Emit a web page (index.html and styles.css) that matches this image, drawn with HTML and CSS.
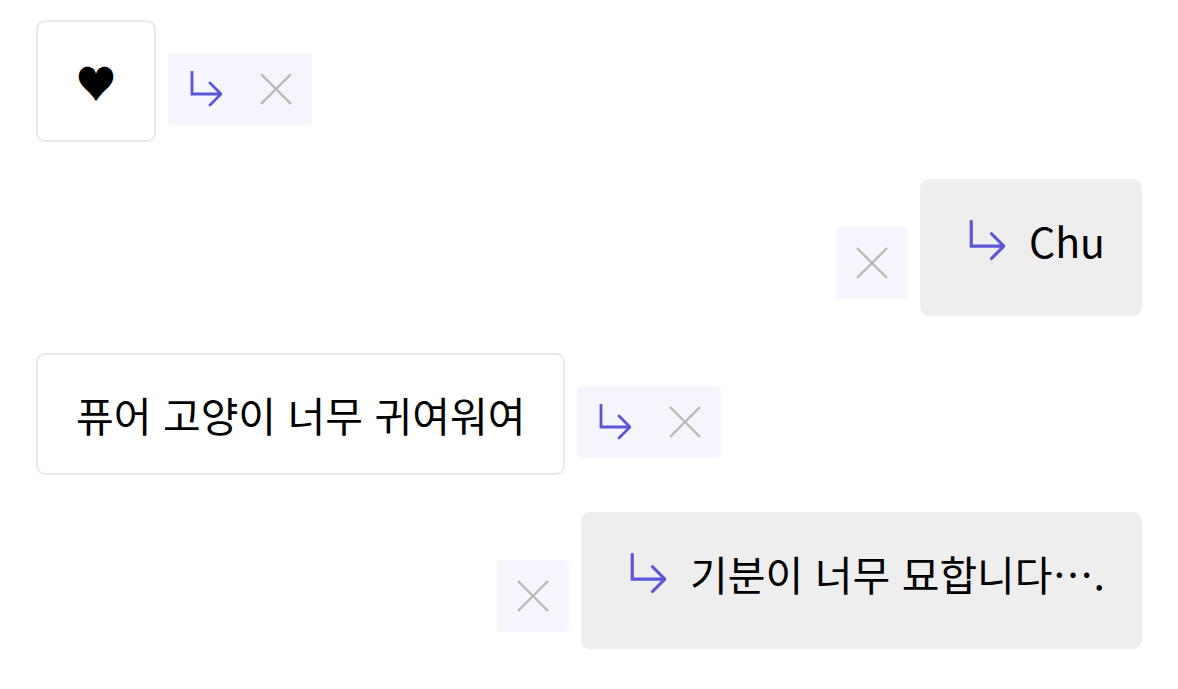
FILE: index.html
```html
<!DOCTYPE html>
<html lang="ko">
<head>
<meta charset="utf-8">
<link rel="stylesheet" href="styles.css">
</head>
<body>
<div class="thread">
  <div class="row">
    <div class="bubble outline heart">♥</div>
    <div class="actions">
      <button class="act" aria-label="reply">
        <svg class="arrow-sm" viewBox="0 0 32 36"><path d="M2 1V23H31M20 12L31 23L20 34"/></svg>
      </button>
      <button class="act" aria-label="remove">
        <svg class="x" viewBox="0 0 32 32"><path d="M1 1L31 31M31 1L1 31"/></svg>
      </button>
    </div>
  </div>
  <div class="row right">
    <div class="actions">
      <button class="act" aria-label="remove">
        <svg class="x" viewBox="0 0 32 32"><path d="M1 1L31 31M31 1L1 31"/></svg>
      </button>
    </div>
    <div class="bubble filled">
      <svg class="arrow-lg" viewBox="0 0 32 36"><path d="M2 1V23H31M20 12L31 23L20 34"/></svg>
      <span>Chu</span>
    </div>
  </div>
  <div class="row">
    <div class="bubble outline">퓨어 고양이 너무 귀여워여</div>
    <div class="actions">
      <button class="act" aria-label="reply">
        <svg class="arrow-sm" viewBox="0 0 32 36"><path d="M2 1V23H31M20 12L31 23L20 34"/></svg>
      </button>
      <button class="act" aria-label="remove">
        <svg class="x" viewBox="0 0 32 32"><path d="M1 1L31 31M31 1L1 31"/></svg>
      </button>
    </div>
  </div>
  <div class="row right">
    <div class="actions">
      <button class="act" aria-label="remove">
        <svg class="x" viewBox="0 0 32 32"><path d="M1 1L31 31M31 1L1 31"/></svg>
      </button>
    </div>
    <div class="bubble filled">
      <svg class="arrow-lg" viewBox="0 0 32 36"><path d="M2 1V23H31M20 12L31 23L20 34"/></svg>
      <span>기분이 너무 묘합니다….</span>
    </div>
  </div>
</div>
</body>
</html>
```
FILE: styles.css
```css
* { box-sizing: border-box; }
html, body { margin: 0; background: #ffffff; }
body {
  font-family: "Noto Sans CJK KR", "Noto Sans", sans-serif;
  color: #000;
}
.thread {
  display: flex;
  flex-direction: column;
  gap: 37px;
  padding: 20px 36px;
}
.row {
  display: flex;
  align-items: flex-end;
  gap: 12px;
}
.row.right { justify-content: flex-end; }
.bubble {
  font-size: 41px;
  line-height: 60px;
  white-space: nowrap;
}
.outline {
  border: 2px solid #e9e9e9;
  border-radius: 9px;
  padding: 29px 38px;
  background: #fff;
}
.heart { width: 120px; text-align: center; padding-left: 0; padding-right: 0; }
.filled {
  display: flex;
  align-items: center;
  gap: 24px;
  background: #eeeeee;
  border-radius: 9px;
  padding: 31px 37px 46px 49px;
}
.actions {
  display: flex;
  background: #f5f5fd;
  border-radius: 5px;
  margin-bottom: 17px;
}
.act {
  width: 72px;
  height: 72px;
  border: 0;
  padding: 0;
  background: transparent;
  display: flex;
  align-items: center;
  justify-content: center;
}
.arrow-sm, .arrow-lg {
  fill: none;
  stroke: #5b56d8;
  stroke-width: 2.8;
  stroke-linecap: round;
  stroke-linejoin: miter;
}
.arrow-sm { width: 32px; height: 36px; margin-left: 4px; }
.arrow-lg { width: 36px; height: 41px; }
.x {
  width: 32px;
  height: 32px;
  fill: none;
  stroke: #b9b9b9;
  stroke-width: 2.4;
}
```
